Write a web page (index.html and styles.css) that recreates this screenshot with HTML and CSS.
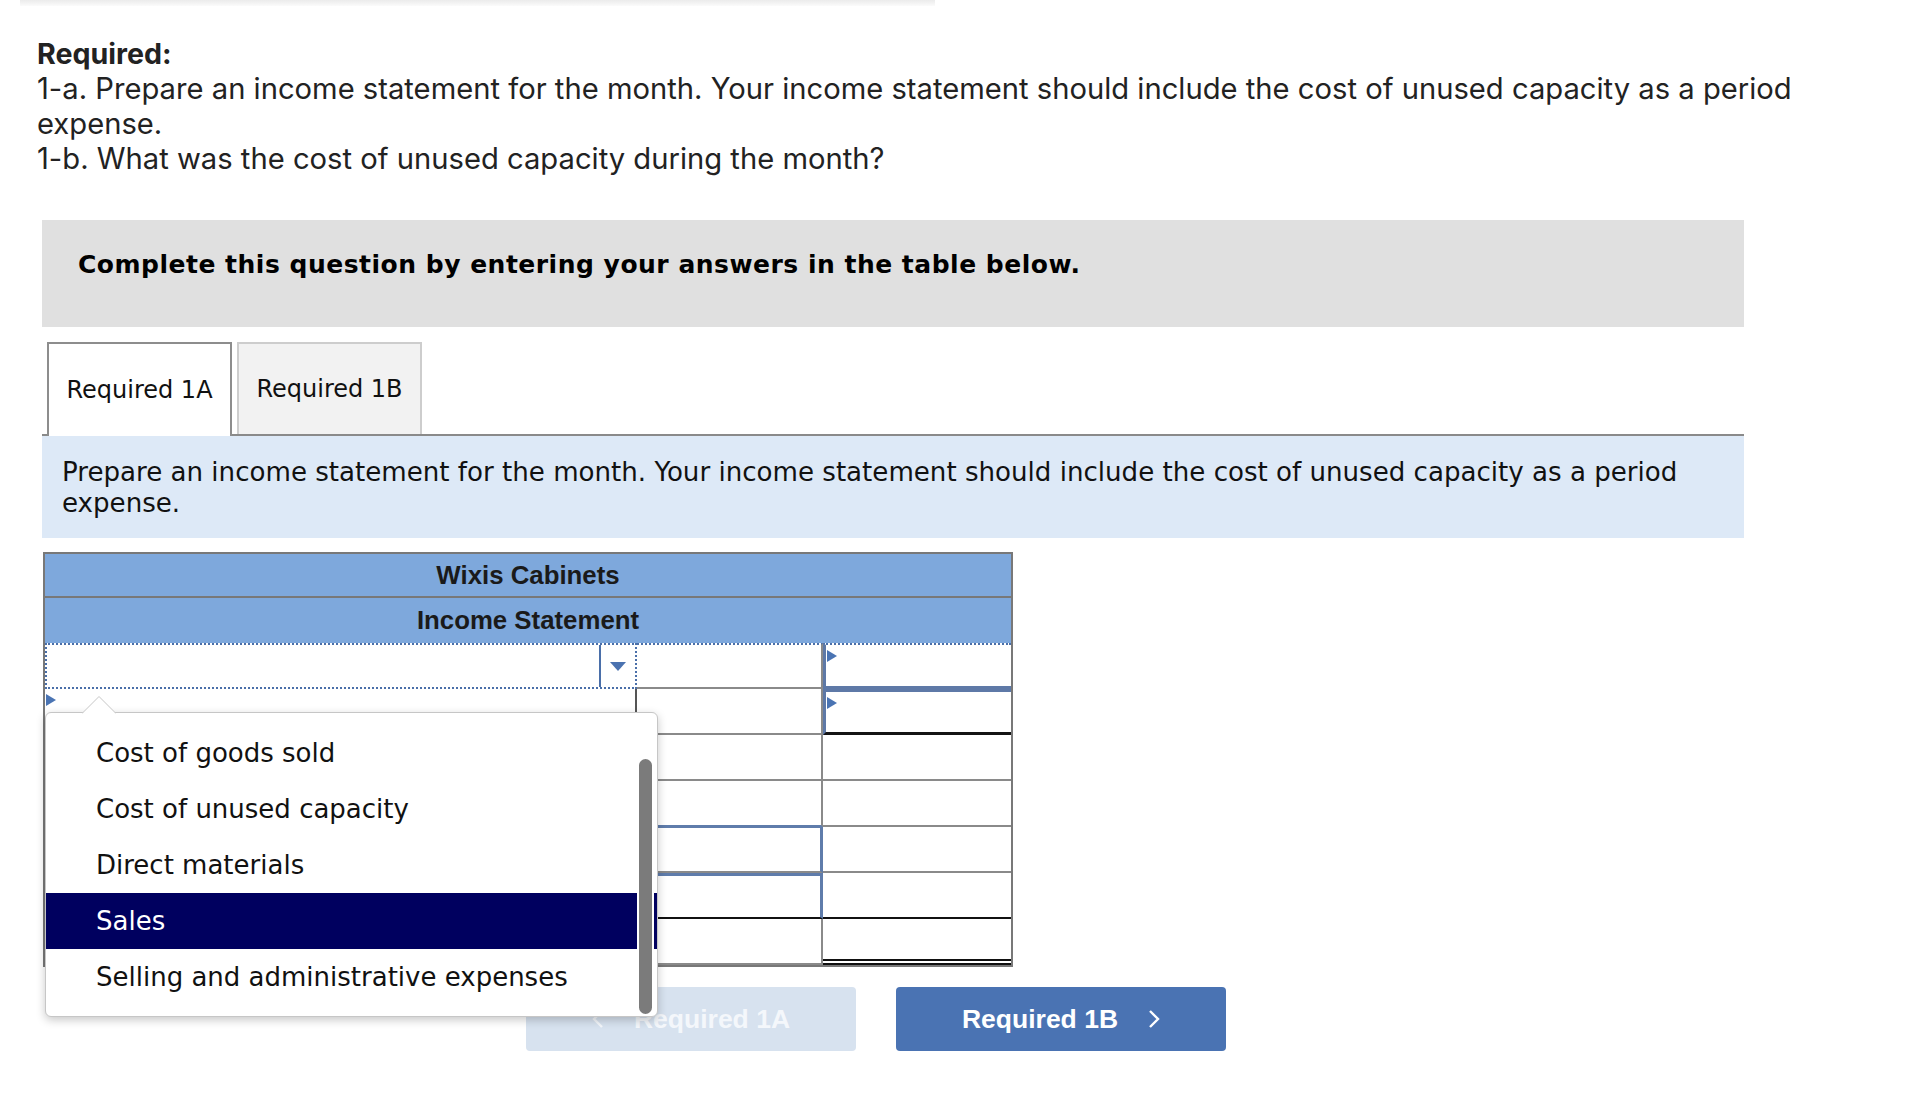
FILE: index.html
```html
<!DOCTYPE html>
<html lang="en">
<head>
<meta charset="utf-8">
<title>Income Statement</title>
<link rel="stylesheet" href="styles.css">
</head>
<body>
<div class="topbar"></div>

<div class="required">
  <div class="req-title">Required:</div>
  <div class="req-line">1-a. Prepare an income statement for the month. Your income statement should include the cost of unused capacity as a period expense.</div>
  <div class="req-line">1-b. What was the cost of unused capacity during the month?</div>
</div>

<div class="work">
  <div class="instr">Complete this question by entering your answers in the table below.</div>

  <div class="tabs">
    <div class="tab active">Required 1A</div>
    <div class="tab">Required 1B</div>
  </div>

  <div class="prompt">Prepare an income statement for the month. Your income statement should include the cost of unused capacity as a period expense.</div>

  <div class="sheet">
    <div class="hdr hdr-top">Wixis Cabinets</div>
    <div class="hdr">Income Statement</div>
    <div class="grid">
      <!-- row 1 -->
      <div class="cell c1 select"><span class="sel-arrow"><span class="tri"></span></span></div>
      <div class="cell c2 focus-top"></div>
      <div class="cell c3 focus-top box box-first"><span class="flag"></span></div>
      <!-- row 2 -->
      <div class="cell c1 dark-right"><span class="flag"></span></div>
      <div class="cell c2"></div>
      <div class="cell c3 box box-second"><span class="flag"></span></div>
      <!-- row 3 -->
      <div class="cell c1"></div>
      <div class="cell c2"></div>
      <div class="cell c3"></div>
      <!-- row 4 -->
      <div class="cell c1"></div>
      <div class="cell c2 blue-bottom"></div>
      <div class="cell c3"></div>
      <!-- row 5 -->
      <div class="cell c1"></div>
      <div class="cell c2 in-blue"></div>
      <div class="cell c3"></div>
      <!-- row 6 -->
      <div class="cell c1"></div>
      <div class="cell c2 in-blue in-blue-top black-bottom"></div>
      <div class="cell c3 black-bottom"></div>
      <!-- row 7 -->
      <div class="cell c1"></div>
      <div class="cell c2"></div>
      <div class="cell c3 double-bottom"></div>
    </div>

    <div class="dropdown">
      <svg class="notch" width="34" height="18" viewBox="0 0 34 18">
        <polygon points="0,17.5 17,0.5 34,17.5" fill="#fff"/>
        <polyline points="0,17.5 17,0.5 34,17.5" fill="none" stroke="#c6c6c6" stroke-width="1"/>
        <rect x="1" y="17" width="32" height="1" fill="#fff"/>
      </svg>
      <div class="opt">Cost of goods sold</div>
      <div class="opt">Cost of unused capacity</div>
      <div class="opt">Direct materials</div>
      <div class="opt selected">Sales</div>
      <div class="opt">Selling and administrative expenses</div>
      <div class="scroll-thumb"></div>
    </div>
  </div>

  <div class="nav">
    <div class="btn btn-prev">
      <svg class="chev" width="12" height="20" viewBox="0 0 12 20"><polyline points="10,2 2,10 10,18" fill="none" stroke="#f4f7fb" stroke-width="2.4"/></svg>
      <span>Required 1A</span>
    </div>
    <div class="btn btn-next">
      <span>Required 1B</span>
      <svg class="chev" width="12" height="20" viewBox="0 0 12 20"><polyline points="2,2 10,10 2,18" fill="none" stroke="#ffffff" stroke-width="2.4"/></svg>
    </div>
  </div>
</div>
</body>
</html>
```

FILE: styles.css
```css
* { box-sizing: border-box; }

body {
  margin: 0;
  background: #ffffff;
  color: #222222;
}

.topbar {
  margin-left: 20px;
  width: 915px;
  height: 6px;
  background: linear-gradient(#ebebeb, #fbfbfb);
}

.required {
  margin: 30px 0 0 37px;
  width: 1800px;
  font-family: Inter, "Liberation Sans", sans-serif;
  font-size: 29.2px;
  line-height: 35px;
  color: #222222;
}

.req-title { font-weight: 700; font-size: 28.6px; }

.work {
  margin: 44px 0 0 42px;
  width: 1702px;
}

.instr {
  background: #e0e0e0;
  height: 107px;
  padding: 30px 36px 0;
  font-family: "DejaVu Sans", Verdana, sans-serif;
  font-weight: 700;
  font-size: 25px;
  letter-spacing: 0.5px;
  line-height: 30px;
  color: #000000;
}

.tabs {
  display: flex;
  align-items: flex-start;
  gap: 5px;
  margin-top: 15px;
  padding-left: 5px;
  height: 94px;
  border-bottom: 2px solid #8a8a8a;
}

.tab {
  width: 185px;
  height: 92px;
  display: flex;
  align-items: center;
  justify-content: center;
  font-family: "DejaVu Sans", Verdana, sans-serif;
  font-size: 24px;
  color: #111111;
  background: #f2f2f2;
  border: 2px solid #cdcdcd;
  border-bottom: none;
}

.tab.active {
  position: relative;
  height: 94px;
  margin-bottom: -2px;
  background: #ffffff;
  border-color: #8d8d8d;
}

.prompt {
  background: #dde9f7;
  padding: 21px 20px 19px;
  font-family: "DejaVu Sans", Verdana, sans-serif;
  font-size: 26.1px;
  line-height: 31px;
  color: #111111;
}

.sheet {
  position: relative;
  margin: 14px 0 0 1px;
  width: 970px;
  border: 2px solid #787878;
}

.hdr {
  height: 45px;
  background: #7ea8dc;
  display: flex;
  align-items: center;
  justify-content: center;
  font-family: "Liberation Sans", Arial, sans-serif;
  font-weight: 700;
  font-size: 25.8px;
  color: #1a1a1a;
}

.hdr-top {
  height: 44px;
  border-bottom: 2px solid #787878;
}

.grid {
  display: grid;
  grid-template-columns: 592px 186px 188px;
  grid-auto-rows: 46px;
}

.cell {
  position: relative;
  border-bottom: 2px solid #8a8a8a;
  border-right: 2px solid #8a8a8a;
  background: #ffffff;
}

.cell.c3 { border-right: none; }

.select {
  border: 2px dotted #4a6fa9;
  display: flex;
  justify-content: flex-end;
}

.sel-arrow {
  width: 36px;
  border-left: 2px solid #4a6fa9;
  display: flex;
  align-items: center;
  justify-content: center;
}

.tri {
  width: 0;
  height: 0;
  border-left: 8px solid transparent;
  border-right: 8px solid transparent;
  border-top: 9px solid #4a72b0;
}

.focus-top { border-top: 2px dotted #4a6fa9; }

.box {
  border-left: 3px solid #5e79a7;
  border-right: 3px solid #5e79a7;
}

.box-first { border-bottom: 3px solid #5e79a7; }

.box-second {
  border-top: 3px solid #5e79a7;
  border-bottom: 3px solid #141414;
}

.dark-right { border-right-color: #555555; }

.blue-bottom { border-bottom-color: #5f7cab; }

.in-blue {
  border-top: 1px solid #5f7cab;
  border-right: 3px solid #5f7cab;
}

.in-blue-top { border-top: 3px solid #5f7cab; }

.black-bottom { border-bottom: 2px solid #111111; }

.double-bottom { border-bottom: 6px double #111111; }

.flag {
  position: absolute;
  top: 5px;
  left: 1px;
  width: 0;
  height: 0;
  border-left: 10px solid #4a74b3;
  border-top: 6px solid transparent;
  border-bottom: 6px solid transparent;
}

.dropdown {
  position: absolute;
  z-index: 5;
  left: 0;
  top: 158px;
  width: 613px;
  height: 305px;
  padding-top: 12px;
  background: #ffffff;
  border: 1px solid #c6c6c6;
  border-radius: 6px;
  box-shadow: 0 3px 10px rgba(0, 0, 0, 0.22);
  font-family: "DejaVu Sans", Verdana, sans-serif;
  font-size: 26px;
  color: #111111;
}

.notch {
  position: absolute;
  top: -17px;
  left: 36px;
}

.opt {
  height: 56px;
  padding-left: 50px;
  display: flex;
  align-items: center;
}

.opt.selected {
  background: #00005f;
  color: #ffffff;
}

.scroll-thumb {
  position: absolute;
  right: 3px;
  top: 44px;
  bottom: 0;
  width: 17px;
  border: 2px solid #ffffff;
  border-radius: 9px;
  background: #7b7b7b;
}

.nav {
  display: flex;
  gap: 40px;
  margin-top: 20px;
  padding-left: 484px;
}

.btn {
  width: 330px;
  height: 64px;
  border-radius: 4px;
  display: flex;
  align-items: center;
  justify-content: center;
  gap: 30px;
  font-family: "Liberation Sans", Arial, sans-serif;
  font-weight: 700;
  font-size: 26.5px;
}

.btn-prev {
  background: #d7e2ef;
  color: #f4f7fb;
}

.btn-next {
  background: #4a73b3;
  color: #ffffff;
}
```
